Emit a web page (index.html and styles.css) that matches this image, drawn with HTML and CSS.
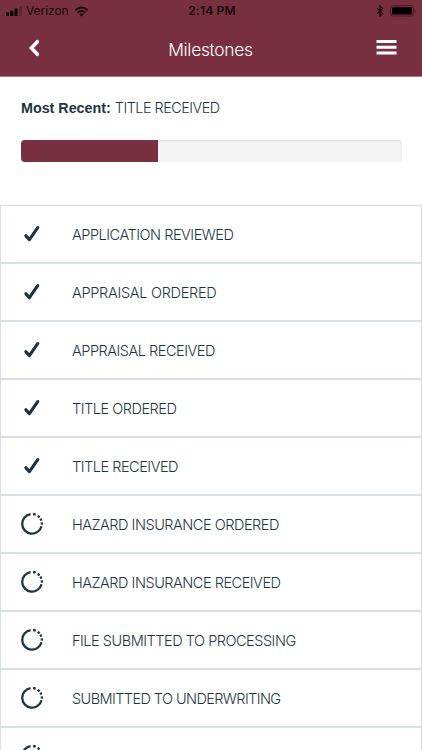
FILE: index.html
```html
<!DOCTYPE html>
<html lang="en">
<head>
<meta charset="utf-8">
<title>Milestones</title>
<link rel="stylesheet" href="styles.css">
</head>
<body>
<svg class="symbols" aria-hidden="true">
  <symbol id="check" viewBox="0 0 22 22"><path d="M4.9 12.8 8.4 16.6 16.7 4.6" fill="none" stroke="currentColor" stroke-width="3.2" stroke-linecap="round" stroke-linejoin="round"/></symbol>
  <symbol id="pending" viewBox="0 0 24 24"><g fill="none" stroke="currentColor" stroke-width="2.3"><path d="M10.6 2.1A9.8 9.8 0 1 0 21.5 14.2"/><path d="M13.1 2A9.8 9.8 0 0 1 15.7 2.7M17.7 3.7A9.8 9.8 0 0 1 19.5 5.4M20.4 6.7A9.8 9.8 0 0 1 21.3 8.7M21.8 10.3A9.8 9.8 0 0 1 21.8 12.6"/></g></symbol>
</svg>
<header class="header">
  <div class="status">
    <div class="carrier">
      <svg class="signal" viewBox="0 0 17 10"><path d="M0 6.5h3V10H0zM4.3 4.8h3V10h-3zM8.5 2.5h3V10h-3z"/><path d="M13 0h3v10h-3z" opacity=".22"/></svg>
      <span>Verizon</span>
      <svg class="wifi" viewBox="0 0 16 11"><path d="M1.3 4.1Q8-1.8 14.7 4.1M3.9 6.8Q8 3.2 12.1 6.8" fill="none" stroke="#160a0d" stroke-width="2"/><path d="M5.8 8.4Q8 6.7 10.2 8.4L8 10.7z"/></svg>
    </div>
    <span class="time">2:14 PM</span>
    <div class="power">
      <svg class="bluetooth" viewBox="0 0 8 12"><path d="M1 3.2 6.7 8.6 4 11V1l2.7 2.4L1 8.8" fill="none" stroke="#160a0d" stroke-width="1.15"/></svg>
      <svg class="battery" viewBox="0 0 27 12"><rect x=".5" y=".7" width="23" height="10.4" rx="2.5" fill="none" stroke="#4a1c28"/><rect x="2" y="2.2" width="20" height="7.4" rx="1" fill="#000"/><path d="M24.7 4.2q1.4.5 1.4 1.7t-1.4 1.7z" fill="#4a1c28"/></svg>
    </div>
  </div>
  <nav class="nav">
    <svg class="back" viewBox="0 0 12 18"><path d="M9.4 2.7 3.4 9l6 6.3" fill="none" stroke="#fff" stroke-width="3.6" stroke-linecap="round"/></svg>
    <h1 class="title">Milestones</h1>
    <svg class="menu" viewBox="0 0 21 15"><path d="M.5 1.5h20M.5 7.3h20M.5 13.1h20" stroke="#fff" stroke-width="3"/></svg>
  </nav>
</header>
<section class="summary">
  <p class="recent"><b>Most Recent:</b> <span>TITLE RECEIVED</span></p>
  <div class="track"><div class="fill"></div></div>
</section>
<ul class="list">
  <li><svg class="check"><use href="#check"/></svg><span>APPLICATION REVIEWED</span></li>
  <li><svg class="check"><use href="#check"/></svg><span class="wide">APPRAISAL ORDERED</span></li>
  <li><svg class="check"><use href="#check"/></svg><span>APPRAISAL RECEIVED</span></li>
  <li><svg class="check"><use href="#check"/></svg><span>TITLE ORDERED</span></li>
  <li><svg class="check"><use href="#check"/></svg><span>TITLE RECEIVED</span></li>
  <li><svg class="pending"><use href="#pending"/></svg><span>HAZARD INSURANCE ORDERED</span></li>
  <li><svg class="pending"><use href="#pending"/></svg><span>HAZARD INSURANCE RECEIVED</span></li>
  <li><svg class="pending"><use href="#pending"/></svg><span>FILE SUBMITTED TO PROCESSING</span></li>
  <li><svg class="pending"><use href="#pending"/></svg><span class="tight">SUBMITTED TO UNDERWRITING</span></li>
  <li><svg class="pending"><use href="#pending"/></svg></li>
</ul>
</body>
</html>
```
FILE: styles.css
```css
* { box-sizing: border-box; }
body {
  margin: 0;
  height: 750px;
  overflow: hidden;
  background: #fff;
  color: #1d3442;
  font-family: Inter, "Liberation Sans", sans-serif;
}
svg { display: block; flex: none; }
.symbols { display: none; }
.header {
  height: 77px;
  background: #782f40;
  border-bottom: 1px solid #a77783;
}
.status {
  display: grid;
  grid-template-columns: 1fr auto 1fr;
  align-items: center;
  height: 22px;
  padding: 0 5px 0 6px;
  color: #160a0d;
  font-size: 12px;
  line-height: 22px;
}
.carrier { display: flex; align-items: center; font-size: 12px; letter-spacing: -.05px; }
.signal { width: 17px; height: 10px; margin: 0 3px 0 0; }
.wifi { width: 15px; height: 11px; margin-left: 5px; }
.time { font-weight: 600; letter-spacing: .2px; padding-left: 1px; }
.power { display: flex; justify-content: flex-end; align-items: center; }
.bluetooth { width: 8px; height: 12px; margin-right: 6px; }
.battery { width: 27px; height: 12px; }
.nav {
  display: grid;
  grid-template-columns: 1fr auto 1fr;
  align-items: center;
  height: 54px;
  padding: 0 25px 0 28px;
  color: #fff;
}
.back { width: 12px; height: 18px; margin-top: -2px; }
.title { margin: 0 4px 0 0; font-size: 17.4px; font-weight: 300; letter-spacing: -.3px; }
.menu { width: 21px; height: 15px; justify-self: end; margin-top: -3px; }
.summary { height: 128px; padding: 22px 20px 0 21px; }
.recent { margin: 0; font-size: 14.3px; line-height: 18px; white-space: nowrap; }
.recent b { font-family: "Liberation Sans", sans-serif; font-size: 14.3px; }
.recent span { font-weight: 300; letter-spacing: -.45px; }
.track {
  height: 22px;
  margin-top: 23px;
  overflow: hidden;
  border-radius: 4px;
  background: #f4f4f4;
  box-shadow: inset 0 1px 2px #dedede;
}
.fill { width: 36%; height: 100%; background: #782f40; }
.list {
  margin: 0;
  padding: 0;
  border: 1px solid #d3deea;
  list-style: none;
}
.list li {
  display: flex;
  align-items: center;
  height: 58px;
  padding-left: 19px;
  border-bottom: 2px solid #d5e0ea;
  font-size: 14.5px;
  font-weight: 300;
  letter-spacing: -.48px;
  white-space: nowrap;
}
.list .wide { letter-spacing: -.3px; }
.list .tight { letter-spacing: -.59px; }
.list svg { width: 24px; height: 24px; margin-right: 28px; }
.list .check { width: 22px; height: 22px; margin: 0 29px 0 1px; }
```
